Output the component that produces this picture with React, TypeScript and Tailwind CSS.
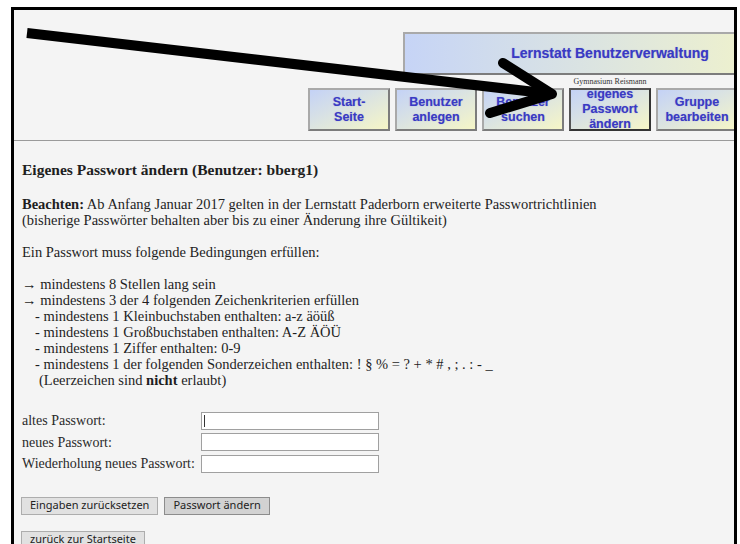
import React from "react";

const serif = { fontFamily: '"Liberation Serif", "Times New Roman", serif' };

function NavButton({ lines, active = false }: { lines: string[]; active?: boolean }) {
  return (
    <div
      className={
        "w-[82px] h-[43px] shrink-0 flex flex-col items-center justify-center overflow-hidden border-2 bg-gradient-to-br from-[#c4d2f6] to-[#f6f6c6] " +
        (active
          ? "border-t-[#555] border-l-[#555] border-r-[#333] border-b-[#333]"
          : "border-t-[#a9a9a9] border-l-[#a9a9a9] border-r-[#7c7c7c] border-b-[#7c7c7c]")
      }
    >
      {lines.map((l) => (
        <span
          key={l}
          className="block text-[12.5px] leading-[15px] font-bold text-[#3a3ac4] whitespace-nowrap [text-shadow:0_0_1px_rgba(80,80,200,0.5)]"
          style={{ fontFamily: '"Liberation Sans", Arial, sans-serif' }}
        >
          {l}
        </span>
      ))}
    </div>
  );
}

function Field({ label, caret = false }: { label: string; caret?: boolean }) {
  return (
    <div className="flex items-center h-[21.5px]">
      <span className="w-[179px] shrink-0 text-[14px] text-[#2a2a2a] whitespace-nowrap">{label}</span>
      <div className="relative w-[178px] h-[18px] bg-white border border-[#a0a0a0]">
        {caret && <span className="absolute left-[2px] top-[2px] w-px h-[12px] bg-[#333]" />}
      </div>
    </div>
  );
}

function FormButton({ children, dark = false }: { children: React.ReactNode; dark?: boolean }) {
  return (
    <div
      className={
        "h-[18px] px-[8px] flex items-center text-[11px] text-[#222] border whitespace-nowrap " +
        (dark ? "bg-[#d2d2d2] border-[#8c8c8c]" : "bg-[#e1e1e1] border-[#adadad]")
      }
      style={{ fontFamily: '"Noto Sans", "Open Sans", sans-serif' }}
    >
      {children}
    </div>
  );
}

export default function App() {
  return (
    <div className="relative w-[740px] h-[544px] bg-white overflow-hidden">
      <div className="ml-[11px] mt-[7px] w-[726px] h-[540px] border-[3px] border-b-0 border-black bg-[#f4f4f4] overflow-hidden">
        {/* page head: title banner, school name, navigation */}
        <div className="h-[130px] pt-[22px]">
          <div className="ml-[389px] w-[414px] h-[43px] flex items-center justify-center border-2 border-t-[#a9a9a9] border-l-[#a9a9a9] border-r-[#7c7c7c] border-b-[#7c7c7c] bg-gradient-to-r from-[#c6d4f6] to-[#f6f6c4]">
            <span
              className="text-[14px] font-bold text-[#3a3ac4] whitespace-nowrap [text-shadow:0_0_1px_rgba(80,80,200,0.5)]"
              style={{ fontFamily: '"Liberation Sans", Arial, sans-serif' }}
            >
              Lernstatt Benutzerverwaltung
            </span>
          </div>
          <div className="ml-[389px] w-[414px] h-[13px] flex items-center justify-center">
            <span className="text-[8px] leading-[10px] text-[#333]" style={serif}>
              Gymnasium Reismann
            </span>
          </div>
          <div className="ml-[294px] flex gap-[5px]">
            <NavButton lines={["Start-", "Seite"]} />
            <NavButton lines={["Benutzer", "anlegen"]} />
            <NavButton lines={["Benutzer", "suchen"]} />
            <NavButton lines={["eigenes", "Passwort", "ändern"]} active />
            <NavButton lines={["Gruppe", "bearbeiten"]} />
          </div>
        </div>
        <div className="h-px bg-[#9a9a9a]" />

        <div className="pt-[20px] pl-[8px] text-[#1e1e1e]" style={serif}>
          <h1 className="text-[15.5px] leading-[18px] font-bold">
            Eigenes Passwort ändern (Benutzer: bberg1)
          </h1>

          <div className="mt-[17px] text-[14.5px] leading-[16px]">
            <p>
              <b>Beachten:</b> Ab Anfang Januar 2017 gelten in der Lernstatt Paderborn erweiterte Passwortrichtlinien
            </p>
            <p>(bisherige Passwörter behalten aber bis zu einer Änderung ihre Gültikeit)</p>
            <p className="mt-[16px]">Ein Passwort muss folgende Bedingungen erfüllen:</p>
            <div className="mt-[16px]">
              <p>→ mindestens 8 Stellen lang sein</p>
              <p>→ mindestens 3 der 4 folgenden Zeichenkriterien erfüllen</p>
              <p className="pl-[13px]">- mindestens 1 Kleinbuchstaben enthalten: a-z äöüß</p>
              <p className="pl-[13px]">- mindestens 1 Großbuchstaben enthalten: A-Z ÄÖÜ</p>
              <p className="pl-[13px]">- mindestens 1 Ziffer enthalten: 0-9</p>
              <p className="pl-[13px]">
                - mindestens 1 der folgenden Sonderzeichen enthalten: ! § % = ? + * # , ; . : - _
              </p>
              <p className="pl-[17px]">
                (Leerzeichen sind <b>nicht</b> erlaubt)
              </p>
            </div>
          </div>

          <div className="mt-[22px]">
            <Field label="altes Passwort:" caret />
            <Field label="neues Passwort:" />
            <Field label="Wiederholung neues Passwort:" />
          </div>

          <div className="mt-[22px] -ml-px flex gap-[6px]">
            <FormButton>Eingaben zurücksetzen</FormButton>
            <FormButton dark>Passwort ändern</FormButton>
          </div>

          <div className="mt-[16px] -ml-px flex">
            <FormButton>zurück zur Startseite</FormButton>
          </div>
        </div>
      </div>

      {/* hand-drawn pointer onto the active menu entry */}
      <svg
        className="absolute left-0 top-0 pointer-events-none"
        width="740"
        height="544"
        viewBox="0 0 740 544"
      >
        <line x1="27" y1="33" x2="552" y2="94" stroke="#000" strokeWidth="10" />
        <polyline
          points="503,63 552,94 490,113"
          fill="none"
          stroke="#000"
          strokeWidth="10"
          strokeLinejoin="round"
          strokeLinecap="round"
        />
      </svg>
    </div>
  );
}
